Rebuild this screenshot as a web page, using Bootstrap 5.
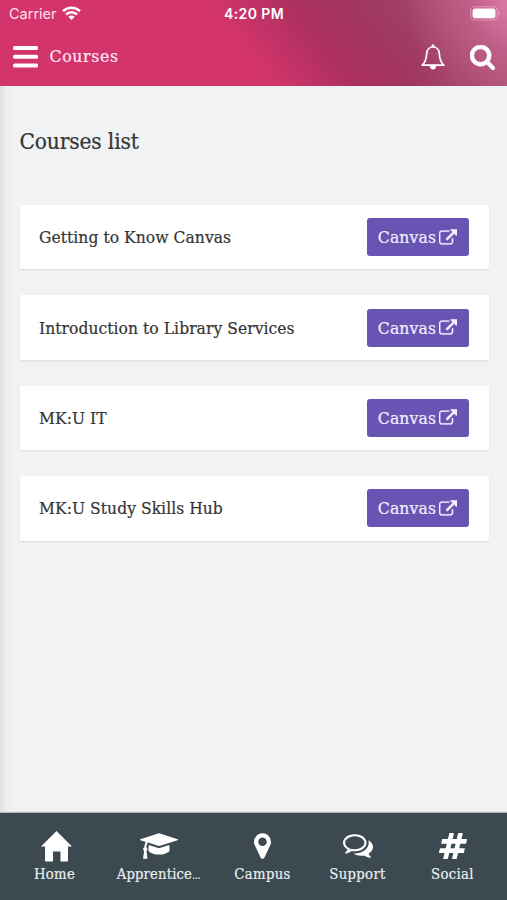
<!DOCTYPE html>
<html lang="en">
<head>
<meta charset="utf-8">
<meta name="viewport" content="width=device-width, initial-scale=1">
<title>Courses</title>
<link rel="stylesheet" href="https://cdn.jsdelivr.net/npm/bootstrap@5.3.0/dist/css/bootstrap.min.css">
<style>
body{font-family:"Roboto Slab","DejaVu Serif Condensed","DejaVu Serif",serif;font-stretch:condensed;background:#f0f2f4;color:#353535;overflow:hidden}
svg{display:block;fill:currentColor;flex:none}
.app-head{height:86px;background:radial-gradient(ellipse 110px 130px at 515px 0,#df7ba6 0,rgba(207,105,148,.55) 40%,rgba(190,90,130,0) 100%),linear-gradient(53deg,#d2346b 0,#d2346b 48%,#ad305f 62%,#a2355e 71%,#a03e62 79%,#a64c70 88%,#b86088 100%);box-shadow:0 1px 1px #dfaebf}
.status{height:27px;font-family:Inter,sans-serif;font-size:14.5px;line-height:27px;display:grid;grid-template-columns:1fr auto 1fr;padding:0 8px 0 9px;color:#fff}
.carrier{color:#ffe1ee;letter-spacing:0}
.clock{font-weight:600;font-size:14px;letter-spacing:.4px}
.bar{height:59px;padding:0 12px 0 13px}
.bar-title{font-size:17.5px;letter-spacing:.65px;color:#ffe6f0;line-height:24px;margin-left:11.5px;padding-bottom:2px}
.bar-title,.page-title,.course,.tab-label,.btn-canvas{-webkit-text-stroke:.2px currentColor}
.page-area{height:727px;padding:41px 18.5px 0 19.5px;background:linear-gradient(90deg,#dfe1e3 0,#eceef0 6px,#f0f2f4 13px)}
.page-title{font-size:22.5px;line-height:28px;letter-spacing:-.15px;margin:0 0 50px}
.course-list{gap:26px}
.course{height:64.4px;padding:0 19.5px;border:0;border-radius:1px;box-shadow:0 1px 2px rgba(0,0,0,.1);font-size:17.3px;letter-spacing:.05px}
.course-name{padding-top:2px}
.btn-canvas{width:102px;height:38px;background:#6854b3;border:0;border-radius:3px;color:#f3efff;font-size:17.3px;letter-spacing:.2px;padding:2px 1px 0 0;gap:3px}
.btn-canvas svg{margin-top:-2px}
.btn-canvas:hover{background:#5a479f;color:#fff}
.tabs{height:87px;background:#3d4950;padding:0 7px;box-shadow:0 -1px 1px #b3babd;position:relative}
.tab-link{width:95px;color:#fff;text-decoration:none;padding-top:16px}
.tab-link.wide{width:113px}
.glyph{height:34px}
.tab-label{font-size:14.7px;line-height:22px;color:#e8eff1;letter-spacing:.35px}
.wide .tab-label{letter-spacing:.15px}
.dots{letter-spacing:-.4px;font-size:11px}
</style>
<script src="https://cdn.jsdelivr.net/npm/bootstrap@5.3.0/dist/js/bootstrap.bundle.min.js"></script>
</head>
<body>
<svg width="0" height="0" class="position-absolute"><defs>
<symbol id="ext" viewBox="0 0 1792 1664"><path d="M1408 928v320q0 119-84.5 203.5t-203.500 84.500h-832q-119 0-203.500-84.500t-84.500-203.500v-832q0-119 84.500-203.500t203.500-84.500h704q14 0 23 9t9 23v64q0 14-9 23t-23 9h-704q-66 0-113 47t-47 113v832q0 66 47 113t113 47h832q66 0 113-47t47-113v-320q0-14 9-23t23-9h64q14 0 23 9t9 23zm384-864v512q0 26-19 45t-45 19-45-19l-176-176-652 652q-10 10-23 10t-23-10l-114-114q-10-10-10-23t10-23l652-652-176-176q-19-19-19-45t19-45 45-19h512q26 0 45 19t19 45z" stroke="currentColor" stroke-width="30"/></symbol>
</defs></svg>
<header class="app-head text-white">
  <div class="status">
    <div class="d-flex align-items-center"><span class="carrier">Carrier</span>
      <svg style="margin-left:5px;margin-top:-2px" width="19" height="14" viewBox="0 0 19 14"><g fill="none" stroke="#fff" stroke-width="2.500"><path d="M1 5.200a12.200 12.200 0 0 1 17 0M4 8.500a7.900 7.900 0 0 1 11 0"/></g><path d="M9.500 14l-3.200-3.300a4.600 4.600 0 0 1 6.400 0z"/></svg></div>
    <div class="clock">4:20 PM</div>
    <div class="d-flex align-items-center justify-content-end"><svg style="margin-right:-2px" width="31" height="15" viewBox="0 0 31 15"><rect x=".7" y=".7" width="26.600" height="13.300" rx="4.200" fill="none" stroke="#fff" stroke-opacity=".35" stroke-width="1.100"/><rect x="2.600" y="2.500" width="22.800" height="9.700" rx="2.500"/><path d="M28.600 5.200q2.200 2.200 0 4.400z" opacity=".45"/></svg></div>
  </div>
  <div class="bar d-flex align-items-center">
    <svg width="25" height="22" viewBox="0 0 25 22"><rect width="25" height="4" rx="1.500"/><rect y="8.700" width="25" height="4" rx="1.500"/><rect y="17.400" width="25" height="4" rx="1.500"/></svg>
    <span class="bar-title">Courses</span>
    <svg class="ms-auto" width="24" height="26" viewBox="0 0 24 26"><path d="M12 3C8.500 3 5.900 5.700 5.700 9.500C5.500 15 4.700 18 1.200 21.200H22.800C19.300 18 18.500 15 18.300 9.500C18.100 5.700 15.500 3 12 3z" fill="none" stroke="#fff" stroke-width="1.700" stroke-linejoin="round"/><path d="M10.500 2.800V1.800a1.500 1.500 0 0 1 3 0v1zM8.800 21.500h6.400a3.200 4 0 0 1-6.400 0z"/></svg>
    <svg style="margin-left:25px;margin-top:1px" width="25" height="25" viewBox="64 128 1664 1664"><path d="M1216 832q0-185-131.500-316.500t-316.500-131.500-316.500 131.500-131.500 316.500 131.500 316.500 316.500 131.500 316.500-131.500 131.500-316.500zm512 832q0 52-38 90t-90 38q-54 0-90-38l-343-342q-179 124-399 124-143 0-273.500-55.500t-225-150-150-225-55.500-273.500 55.500-273.500 150-225 225-150 273.500-55.500 273.500 55.500 225 150 150 225 55.500 273.500q0 220-124 399l343 343q37 37 37 90z" stroke="#fff" stroke-width="40"/></svg>
  </div>
</header>
<main class="page-area">
  <h1 class="page-title fw-normal">Courses list</h1>
  <div class="course-list d-flex flex-column">
    <div class="card course flex-row align-items-center justify-content-between"><span class="course-name">Getting to Know Canvas</span><a class="btn btn-canvas d-flex align-items-center justify-content-center">Canvas<svg width="18" height="17"><use href="#ext"/></svg></a></div>
    <div class="card course flex-row align-items-center justify-content-between"><span class="course-name">Introduction to Library Services</span><a class="btn btn-canvas d-flex align-items-center justify-content-center">Canvas<svg width="18" height="17"><use href="#ext"/></svg></a></div>
    <div class="card course flex-row align-items-center justify-content-between"><span class="course-name">MK:U IT</span><a class="btn btn-canvas d-flex align-items-center justify-content-center">Canvas<svg width="18" height="17"><use href="#ext"/></svg></a></div>
    <div class="card course flex-row align-items-center justify-content-between"><span class="course-name">MK:U Study Skills Hub</span><a class="btn btn-canvas d-flex align-items-center justify-content-center">Canvas<svg width="18" height="17"><use href="#ext"/></svg></a></div>
  </div>
</main>
<nav class="tabs d-flex">
  <a class="tab-link d-flex flex-column align-items-center" href="#"><span class="glyph d-flex align-items-center ps-1"><svg width="31" height="31" viewBox="0 0 31 31"><path d="M15.500 0L31 15.500H27V29.500Q27 30.500 26 30.500H19.500V20.500H12V30.500H5Q4 30.500 4 29.500V15.500H0z"/></svg></span><span class="tab-label">Home</span></a>
  <a class="tab-link wide d-flex flex-column align-items-center" href="#"><span class="glyph d-flex align-items-center"><svg width="38" height="26" viewBox="0 128 2304 1536"><path d="M1774 836l18 316q4 69-82 128t-235 93.500-323 34.500-323-34.500-235-93.500-82-128l18-316 574 181q22 7 48 7t48-7zm530-324q0 23-22 31l-1120 352q-4 1-10 1t-10-1l-652-206q-43 34-71 111.500t-34 178.500q63 36 63 109 0 69-58 107l58 433q2 14-8 25-9 11-24 11h-192q-15 0-24-11-10-11-8-25l58-433q-58-38-58-107 0-73 65-111 11-207 98-330l-333-104q-22-8-22-31t22-31l1120-352q4-1 10-1t10 1l1120 352q22 8 22 31z"/></svg></span><span class="tab-label">Apprentice<span class="dots">...</span></span></a>
  <a class="tab-link d-flex flex-column align-items-center" href="#"><span class="glyph d-flex align-items-center"><svg width="17" height="26" viewBox="384 128 1024 1536"><path d="M1152 640q0-106-75-181t-181-75-181 75-75 181 75 181 181 75 181-75 75-181zm256 0q0 109-33 179l-364 774q-16 33-47.500 52t-67.500 19-67.500-19-46.500-52l-365-774q-33-70-33-179 0-212 150-362t362-150 362 150 150 362z"/></svg></span><span class="tab-label">Campus</span></a>
  <a class="tab-link d-flex flex-column align-items-center" href="#"><span class="glyph d-flex align-items-center"><svg width="30" height="24" viewBox="0 256 1792 1408"><path d="M704 384q-153 0-286 52t-211.500 141-78.500 191q0 82 53 158t149 132l97 56-35 84q34-20 62-39l44-31 53 10q78 14 153 14 153 0 286-52t211.500-141 78.500-191-78.500-191-211.500-141-286-52zm0-128q191 0 353.500 68.500t256.500 186.500 94 257-94 257-256.500 186.500-353.500 68.500q-86 0-176-16-124 88-278 128-36 9-86 16h-3q-11 0-20.500-8t-11.500-21q-1-3-1-6.500t.5-6.500 2-6l2.500-5 3.500-5.500 4-5 4.500-5 4-4.500q5-6 23-25t26-29.500 22.500-29 25-38.500 20.500-44q-124-72-195-177t-71-224q0-139 94-257t256.500-186.500 353.500-68.500zm822 1169q10 24 20.500 44t25 38.500 22.500 29 26 29.500 23 25q1 1 4 4.500t4.500 5 4 5 3.500 5.500l2.500 5 2 6 .5 6.500-1 6.500q-3 14-13 22t-22 7q-50-7-86-16-154-40-278-128-90 16-176 16-271 0-472-132 58 4 88 4 161 0 309-45t264-129q125-92 192-212t67-254q0-77-23-152 129 71 204 178t75 230q0 120-71 224.500t-195 176.500z"/></svg></span><span class="tab-label">Support</span></a>
  <a class="tab-link d-flex flex-column align-items-center" href="#"><span class="glyph d-flex align-items-center"><svg width="28" height="26" viewBox="32 128 1728 1536" preserveAspectRatio="none"><path d="M991 1024l64-256h-254l-64 256h254zm768-504l-56 224q-7 24-31 24h-327l-64 256h311q15 0 25 12 10 14 6 28l-56 224q-5 24-31 24h-327l-81 328q-7 24-31 24h-224q-16 0-26-12-9-12-6-28l78-312h-254l-81 328q-7 24-31 24h-225q-15 0-25-12-9-12-6-28l78-312h-311q-15 0-25-12-9-12-6-28l56-224q7-24 31-24h327l64-256h-311q-15 0-25-12-10-14-6-28l56-224q5-24 31-24h327l81-328q7-24 32-24h224q15 0 25 12 9 12 6 28l-78 312h254l81-328q7-24 32-24h224q15 0 25 12 9 12 6 28l-78 312h311q15 0 25 12 9 12 6 28z"/></svg></span><span class="tab-label">Social</span></a>
</nav>
</body>
</html>
